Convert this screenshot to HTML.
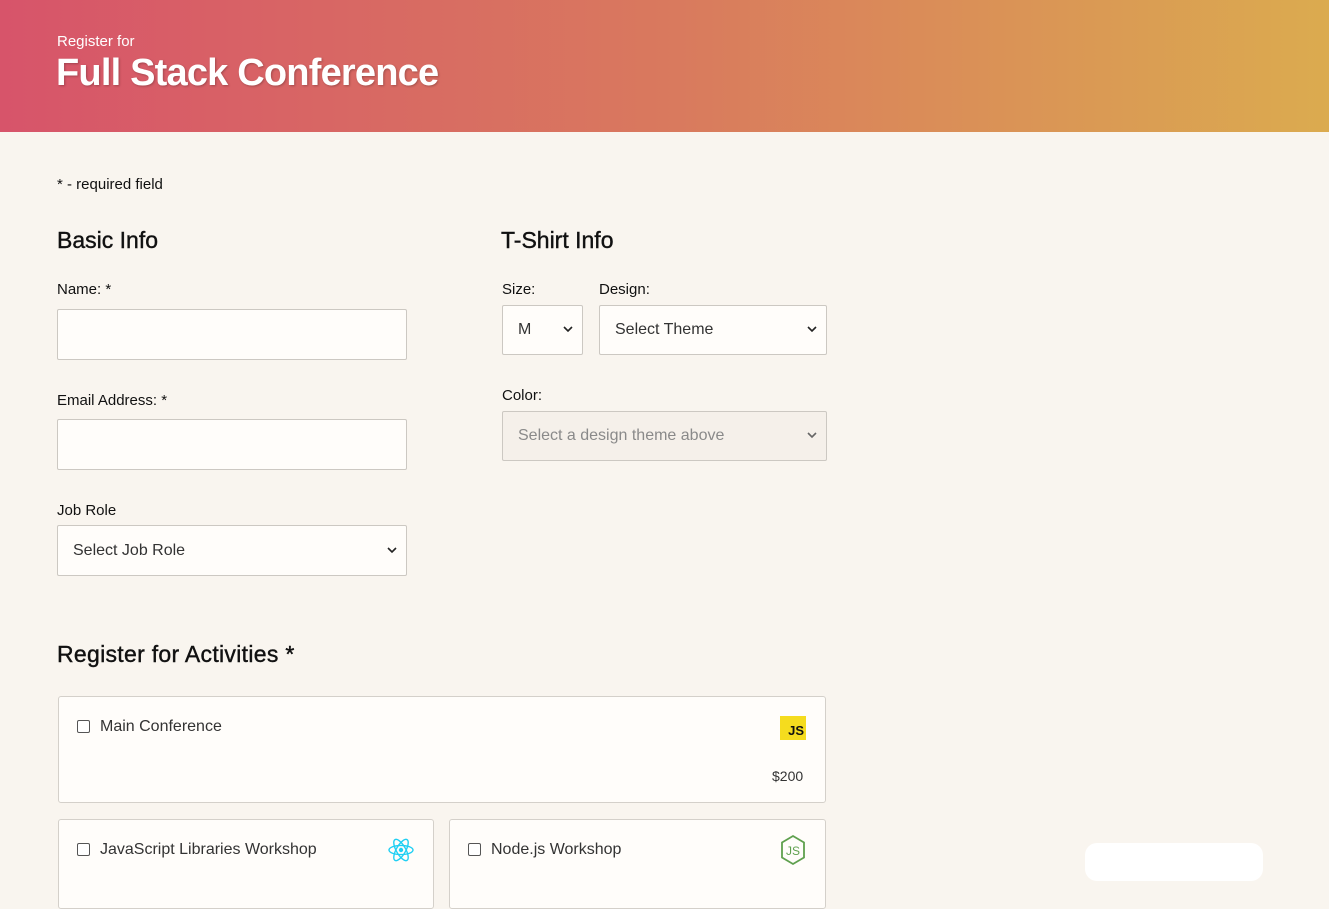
<!DOCTYPE html>
<html><head><meta charset="utf-8"><style>
*{box-sizing:border-box}
body{margin:0;width:1329px;height:892px;overflow:hidden;background:#f9f5ef;font-family:"Liberation Sans",sans-serif;color:#111}
header{height:132px;background:linear-gradient(90deg,#d7546a 0%,#d9795e 50%,#dbab4f 100%);position:relative;color:#fff}
.sub{position:absolute;left:57px;top:33px;font-size:15px}
.title{position:absolute;left:56px;top:52px;font-size:38px;font-weight:bold;letter-spacing:-0.8px;text-shadow:1px 1px 2px rgba(0,0,0,.25)}
.abs{position:absolute}
.lbl{font-size:15px}
h2{margin:0;font-size:23px;font-weight:normal;position:absolute;-webkit-text-stroke:0.4px #111}
.box{position:absolute;background:#fffdfa;border:1px solid #ccc8c2;border-radius:2px}
.sel{font-size:16px;color:#333;padding-left:15px;display:flex;align-items:center}
.chev{position:absolute;right:9px;top:50%;margin-top:-4px}
.card{position:absolute;background:#fffdfa;border:1px solid #d4d0ca;border-radius:3px}
.cb{position:absolute;width:13px;height:13px;border:1px solid #555;border-radius:2px;background:#fff}
.ct{position:absolute;font-size:16px;color:#333}
</style></head><body>
<header><div class="sub">Register for</div><div class="title">Full Stack Conference</div></header>
<div class="abs lbl" style="left:57px;top:176px">* - required field</div>
<h2 style="left:57px;top:227px">Basic Info</h2>
<h2 style="left:501px;top:227px">T-Shirt Info</h2>
<div class="abs lbl" style="left:57px;top:281px">Name: *</div>
<div class="box" style="left:57px;top:309px;width:350px;height:51px"></div>
<div class="abs lbl" style="left:57px;top:392px">Email Address: *</div>
<div class="box" style="left:57px;top:419px;width:350px;height:51px"></div>
<div class="abs lbl" style="left:57px;top:502px">Job Role</div>
<div class="box sel" style="left:57px;top:525px;width:350px;height:51px">Select Job Role<svg class="chev" width="10" height="7" viewBox="0 0 10 7"><path d="M1 1l4 4 4-4" fill="none" stroke="#222" stroke-width="1.6"/></svg></div>
<div class="abs lbl" style="left:502px;top:281px">Size:</div>
<div class="abs lbl" style="left:599px;top:281px">Design:</div>
<div class="box sel" style="left:502px;top:305px;width:81px;height:50px">M<svg class="chev" width="10" height="7" viewBox="0 0 10 7"><path d="M1 1l4 4 4-4" fill="none" stroke="#222" stroke-width="1.6"/></svg></div>
<div class="box sel" style="left:599px;top:305px;width:228px;height:50px">Select Theme<svg class="chev" width="10" height="7" viewBox="0 0 10 7"><path d="M1 1l4 4 4-4" fill="none" stroke="#222" stroke-width="1.6"/></svg></div>
<div class="abs lbl" style="left:502px;top:387px">Color:</div>
<div class="box sel" style="left:502px;top:411px;width:325px;height:50px;background:#f5f0ea;color:#8a8a8a">Select a design theme above<svg class="chev" width="10" height="7" viewBox="0 0 10 7"><path d="M1 1l4 4 4-4" fill="none" stroke="#666" stroke-width="1.6"/></svg></div>
<h2 style="left:57px;top:641px;letter-spacing:0.3px">Register for Activities *</h2>
<div class="card" style="left:58px;top:696px;width:768px;height:107px">
<div class="cb" style="left:18px;top:23px"></div><div class="ct" style="left:41px;top:21px">Main Conference</div>
<div class="abs" style="left:721px;top:19px;width:26px;height:24px;background:#f5dc1e;font-size:13px;font-weight:bold;text-align:right;padding:8px 2px 0 0;line-height:14px">JS</div>
<div class="ct" style="left:713px;top:71px;font-size:14px">$200</div></div>
<div class="card" style="left:58px;top:819px;width:376px;height:90px">
<div class="cb" style="left:18px;top:23px"></div><div class="ct" style="left:41px;top:21px">JavaScript Libraries Workshop</div>
<svg class="abs" style="left:328px;top:16px" width="28" height="28" viewBox="-14 -14 28 28"><g fill="none" stroke="#1fcff3" stroke-width="1.4"><ellipse rx="12" ry="4.6"/><ellipse rx="12" ry="4.6" transform="rotate(60)"/><ellipse rx="12" ry="4.6" transform="rotate(120)"/></g><circle r="2.2" fill="#1fcff3"/></svg></div>
<div class="card" style="left:449px;top:819px;width:377px;height:90px">
<div class="cb" style="left:18px;top:23px"></div><div class="ct" style="left:41px;top:21px">Node.js Workshop</div>
<svg class="abs" style="left:329px;top:14px" width="28" height="32" viewBox="0 0 28 32"><path d="M14 2l11 6.5v15L14 30 3 23.5v-15z" fill="none" stroke="#5fa04e" stroke-width="1.8"/><text x="14" y="21" font-size="12" text-anchor="middle" fill="#5fa04e" font-family="Liberation Sans">JS</text></svg></div>
<div class="abs" style="left:1085px;top:843px;width:178px;height:38px;background:#fff;border-radius:12px"></div>
</body></html>
